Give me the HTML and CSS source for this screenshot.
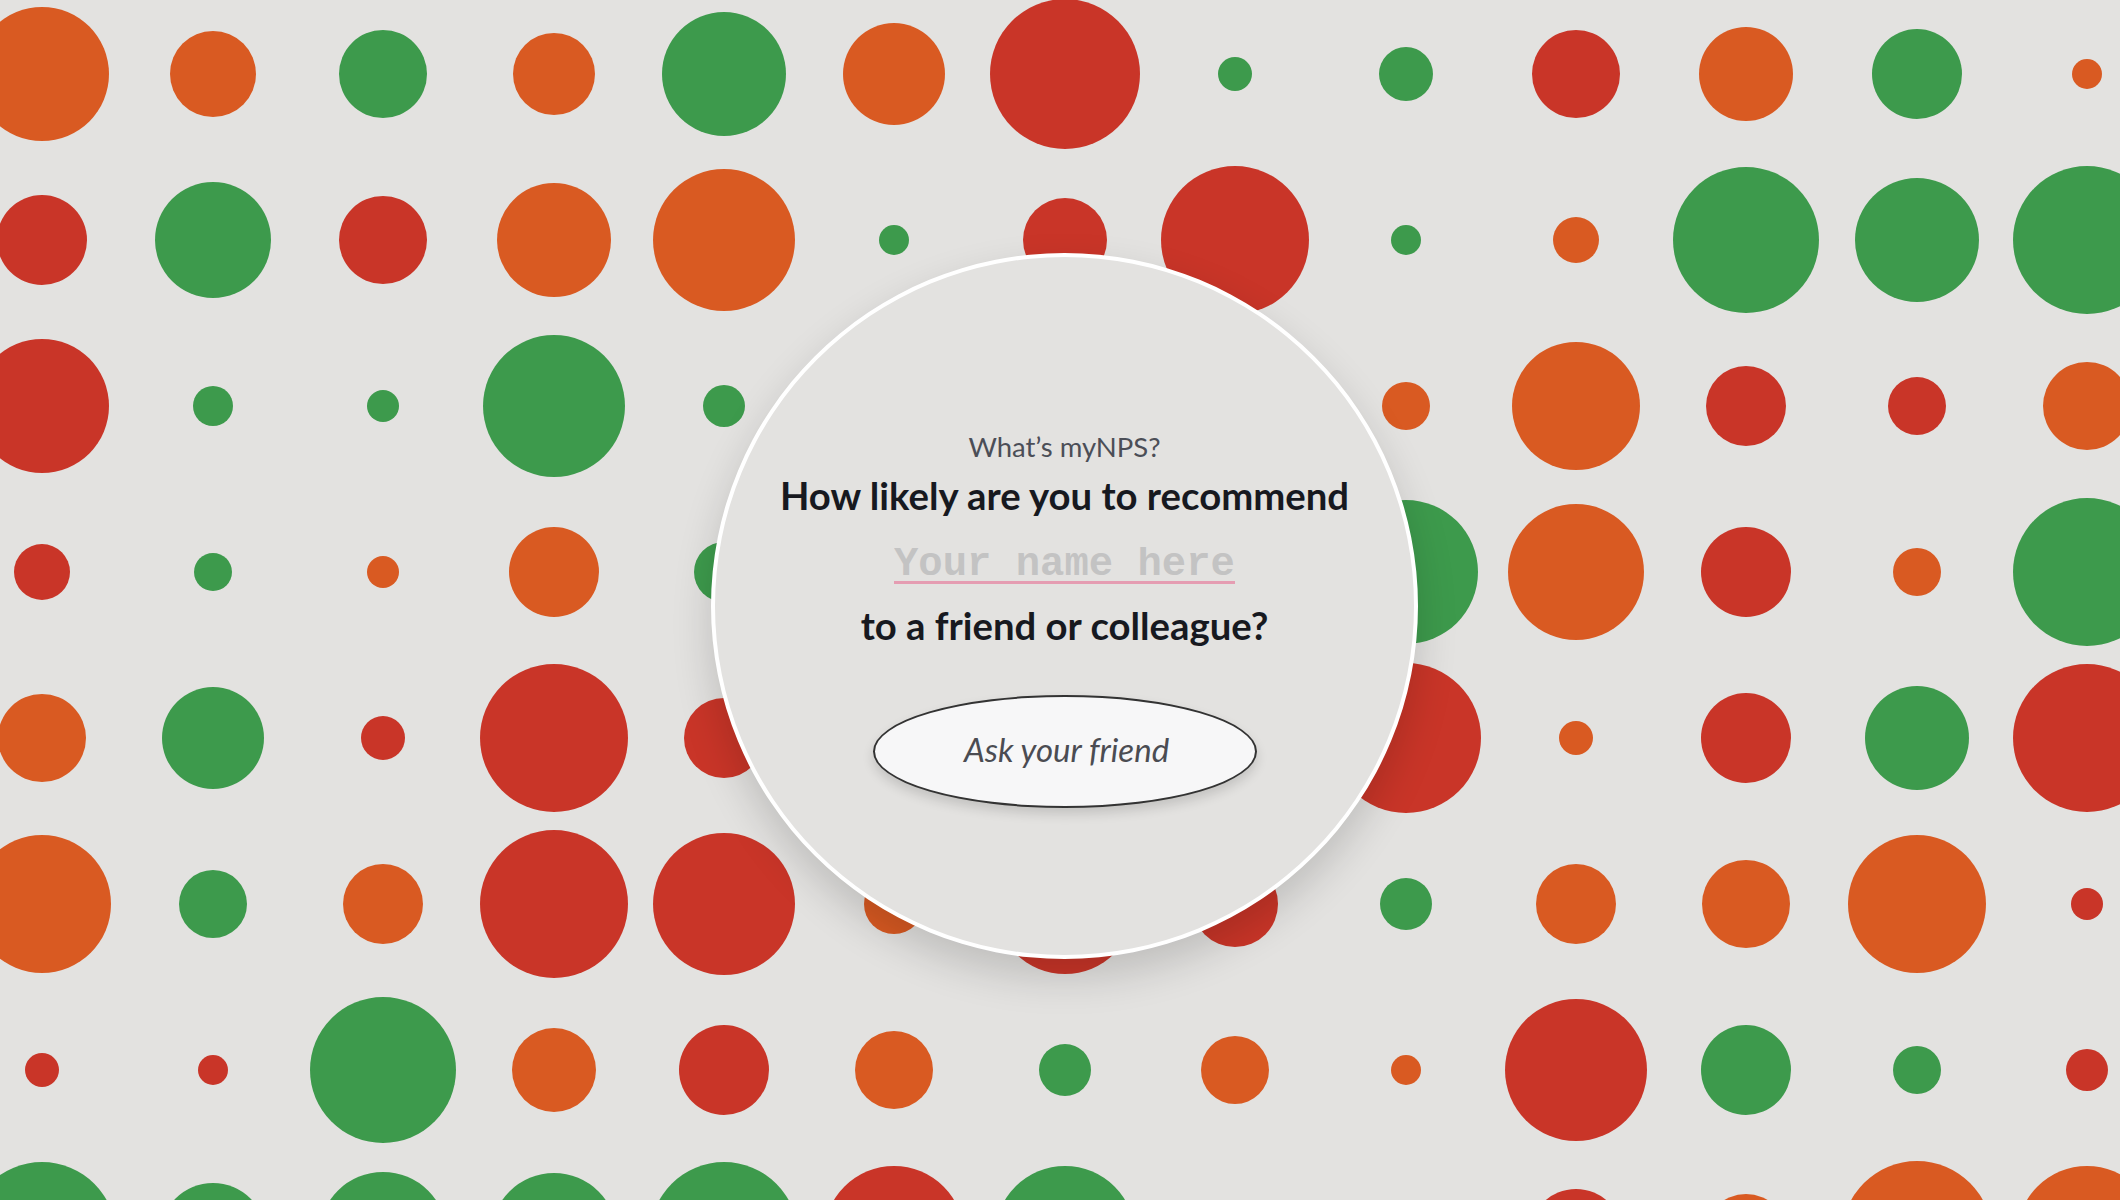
FILE: index.html
```html
<!DOCTYPE html>
<html lang="en">
<head>
<meta charset="utf-8">
<title>myNPS</title>
<link rel="stylesheet" href="styles.css">
</head>
<body>
<div class="backdrop">
<div class="field">
<div class="cell"><span class="dot o" style="width:134px;height:134px"></span></div>
<div class="cell"><span class="dot o" style="width:86px;height:86px"></span></div>
<div class="cell"><span class="dot g" style="width:88px;height:88px"></span></div>
<div class="cell"><span class="dot o" style="width:82px;height:82px"></span></div>
<div class="cell"><span class="dot g" style="width:124px;height:124px"></span></div>
<div class="cell"><span class="dot o" style="width:102px;height:102px"></span></div>
<div class="cell"><span class="dot r" style="width:150px;height:150px"></span></div>
<div class="cell"><span class="dot g" style="width:34px;height:34px"></span></div>
<div class="cell"><span class="dot g" style="width:54px;height:54px"></span></div>
<div class="cell"><span class="dot r" style="width:88px;height:88px"></span></div>
<div class="cell"><span class="dot o" style="width:94px;height:94px"></span></div>
<div class="cell"><span class="dot g" style="width:90px;height:90px"></span></div>
<div class="cell"><span class="dot o" style="width:30px;height:30px"></span></div>

<div class="cell"><span class="dot r" style="width:90px;height:90px"></span></div>
<div class="cell"><span class="dot g" style="width:116px;height:116px"></span></div>
<div class="cell"><span class="dot r" style="width:88px;height:88px"></span></div>
<div class="cell"><span class="dot o" style="width:114px;height:114px"></span></div>
<div class="cell"><span class="dot o" style="width:142px;height:142px"></span></div>
<div class="cell"><span class="dot g" style="width:30px;height:30px"></span></div>
<div class="cell"><span class="dot r" style="width:84px;height:84px"></span></div>
<div class="cell"><span class="dot r" style="width:148px;height:148px"></span></div>
<div class="cell"><span class="dot g" style="width:30px;height:30px"></span></div>
<div class="cell"><span class="dot o" style="width:46px;height:46px"></span></div>
<div class="cell"><span class="dot g" style="width:146px;height:146px"></span></div>
<div class="cell"><span class="dot g" style="width:124px;height:124px"></span></div>
<div class="cell"><span class="dot g" style="width:148px;height:148px"></span></div>

<div class="cell"><span class="dot r" style="width:134px;height:134px"></span></div>
<div class="cell"><span class="dot g" style="width:40px;height:40px"></span></div>
<div class="cell"><span class="dot g" style="width:32px;height:32px"></span></div>
<div class="cell"><span class="dot g" style="width:142px;height:142px"></span></div>
<div class="cell"><span class="dot g" style="width:42px;height:42px"></span></div>
<div class="cell"><span class="dot o" style="width:80px;height:80px"></span></div>
<div class="cell"><span class="dot g" style="width:100px;height:100px"></span></div>
<div class="cell"><span class="dot r" style="width:60px;height:60px"></span></div>
<div class="cell"><span class="dot o" style="width:48px;height:48px"></span></div>
<div class="cell"><span class="dot o" style="width:128px;height:128px"></span></div>
<div class="cell"><span class="dot r" style="width:80px;height:80px"></span></div>
<div class="cell"><span class="dot r" style="width:58px;height:58px"></span></div>
<div class="cell"><span class="dot o" style="width:88px;height:88px"></span></div>

<div class="cell"><span class="dot r" style="width:56px;height:56px"></span></div>
<div class="cell"><span class="dot g" style="width:38px;height:38px"></span></div>
<div class="cell"><span class="dot o" style="width:32px;height:32px"></span></div>
<div class="cell"><span class="dot o" style="width:90px;height:90px"></span></div>
<div class="cell"><span class="dot g" style="width:60px;height:60px"></span></div>
<div class="cell"><span class="dot r" style="width:100px;height:100px"></span></div>
<div class="cell"><span class="dot o" style="width:80px;height:80px"></span></div>
<div class="cell"><span class="dot g" style="width:60px;height:60px"></span></div>
<div class="cell"><span class="dot g" style="width:144px;height:144px"></span></div>
<div class="cell"><span class="dot o" style="width:136px;height:136px"></span></div>
<div class="cell"><span class="dot r" style="width:90px;height:90px"></span></div>
<div class="cell"><span class="dot o" style="width:48px;height:48px"></span></div>
<div class="cell"><span class="dot g" style="width:148px;height:148px"></span></div>

<div class="cell"><span class="dot o" style="width:88px;height:88px"></span></div>
<div class="cell"><span class="dot g" style="width:102px;height:102px"></span></div>
<div class="cell"><span class="dot r" style="width:44px;height:44px"></span></div>
<div class="cell"><span class="dot r" style="width:148px;height:148px"></span></div>
<div class="cell"><span class="dot r" style="width:80px;height:80px"></span></div>
<div class="cell"><span class="dot g" style="width:60px;height:60px"></span></div>
<div class="cell"><span class="dot r" style="width:100px;height:100px"></span></div>
<div class="cell"><span class="dot o" style="width:80px;height:80px"></span></div>
<div class="cell"><span class="dot r" style="width:150px;height:150px"></span></div>
<div class="cell"><span class="dot o" style="width:34px;height:34px"></span></div>
<div class="cell"><span class="dot r" style="width:90px;height:90px"></span></div>
<div class="cell"><span class="dot g" style="width:104px;height:104px"></span></div>
<div class="cell"><span class="dot r" style="width:148px;height:148px"></span></div>

<div class="cell"><span class="dot o" style="width:138px;height:138px"></span></div>
<div class="cell"><span class="dot g" style="width:68px;height:68px"></span></div>
<div class="cell"><span class="dot o" style="width:80px;height:80px"></span></div>
<div class="cell"><span class="dot r" style="width:148px;height:148px"></span></div>
<div class="cell"><span class="dot r" style="width:142px;height:142px"></span></div>
<div class="cell"><span class="dot o" style="width:60px;height:60px"></span></div>
<div class="cell"><span class="dot r" style="width:140px;height:140px"></span></div>
<div class="cell"><span class="dot r" style="width:86px;height:86px"></span></div>
<div class="cell"><span class="dot g" style="width:52px;height:52px"></span></div>
<div class="cell"><span class="dot o" style="width:80px;height:80px"></span></div>
<div class="cell"><span class="dot o" style="width:88px;height:88px"></span></div>
<div class="cell"><span class="dot o" style="width:138px;height:138px"></span></div>
<div class="cell"><span class="dot r" style="width:32px;height:32px"></span></div>

<div class="cell"><span class="dot r" style="width:34px;height:34px"></span></div>
<div class="cell"><span class="dot r" style="width:30px;height:30px"></span></div>
<div class="cell"><span class="dot g" style="width:146px;height:146px"></span></div>
<div class="cell"><span class="dot o" style="width:84px;height:84px"></span></div>
<div class="cell"><span class="dot r" style="width:90px;height:90px"></span></div>
<div class="cell"><span class="dot o" style="width:78px;height:78px"></span></div>
<div class="cell"><span class="dot g" style="width:52px;height:52px"></span></div>
<div class="cell"><span class="dot o" style="width:68px;height:68px"></span></div>
<div class="cell"><span class="dot o" style="width:30px;height:30px"></span></div>
<div class="cell"><span class="dot r" style="width:142px;height:142px"></span></div>
<div class="cell"><span class="dot g" style="width:90px;height:90px"></span></div>
<div class="cell"><span class="dot g" style="width:48px;height:48px"></span></div>
<div class="cell"><span class="dot r" style="width:42px;height:42px"></span></div>

<div class="cell"><span class="dot g" style="width:148px;height:148px"></span></div>
<div class="cell"><span class="dot g" style="width:106px;height:106px"></span></div>
<div class="cell"><span class="dot g" style="width:128px;height:128px"></span></div>
<div class="cell"><span class="dot g" style="width:126px;height:126px"></span></div>
<div class="cell"><span class="dot g" style="width:148px;height:148px"></span></div>
<div class="cell"><span class="dot r" style="width:140px;height:140px"></span></div>
<div class="cell"><span class="dot g" style="width:140px;height:140px"></span></div>
<div class="cell"><span class="dot o" style="width:40px;height:40px"></span></div>
<div class="cell"><span class="dot r" style="width:40px;height:40px"></span></div>
<div class="cell"><span class="dot r" style="width:94px;height:94px"></span></div>
<div class="cell"><span class="dot o" style="width:84px;height:84px"></span></div>
<div class="cell"><span class="dot o" style="width:150px;height:150px"></span></div>
<div class="cell"><span class="dot o" style="width:140px;height:140px"></span></div>
</div>
</div>

<div class="popup">
  <p class="kicker">What’s myNPS?</p>
  <h1 class="question first">How likely are you to recommend</h1>
  <input class="name" type="text" placeholder="Your name here">
  <h1 class="question second">to a friend or colleague?</h1>
  <button class="ask" type="button">Ask your friend</button>
</div>
</body>
</html>
```

FILE: styles.css
```css
html, body {
  margin: 0;
  padding: 0;
  width: 2120px;
  height: 1200px;
  overflow: hidden;
  background: #e3e2e0;
  font-family: Lato, "Open Sans", sans-serif;
}

.backdrop {
  width: 2120px;
  height: 1200px;
  overflow: hidden;
}

.field {
  display: grid;
  grid-template-columns: repeat(13, 170.4px);
  grid-template-rows: repeat(8, 166px);
  margin: -9px 0 0 -42.8px;
}

.cell {
  display: flex;
  align-items: center;
  justify-content: center;
}

.dot {
  display: block;
  flex: none;
  border-radius: 50%;
}

.o { background: #d95a22; }
.g { background: #3d9a4c; }
.r { background: #c93528; }

.popup {
  position: absolute;
  left: 711px;
  top: 253px;
  width: 707px;
  height: 706px;
  box-sizing: border-box;
  border: 4px solid #ffffff;
  border-radius: 50%;
  background: #e3e2e0;
  box-shadow: 0 18px 40px rgba(0, 0, 0, 0.16);
  display: flex;
  flex-direction: column;
  align-items: center;
  padding-top: 176px;
}

.kicker {
  margin: 0;
  font-size: 27.5px;
  line-height: 28px;
  color: #4b4e57;
  font-weight: 400;
}

.question {
  margin: 0;
  font-size: 38.3px;
  line-height: 40px;
  font-weight: 700;
  color: #17191f;
}

.question.first {
  margin-top: 14px;
}

.name {
  margin-top: 32px;
  width: 341px;
  height: 34px;
  padding: 0;
  border: 0;
  border-bottom: 3px solid #e59db2;
  background: transparent;
  font-family: "Liberation Mono", "Courier New", monospace;
  font-weight: 700;
  font-size: 40.6px;
  color: #555;
  text-align: left;
  outline: none;
}

.name::placeholder {
  color: #c3c3c3;
  opacity: 1;
}

.question.second {
  margin-top: 21px;
}

.ask {
  margin-top: 50px;
  width: 384px;
  height: 113px;
  box-sizing: border-box;
  border: 2px solid #333333;
  border-radius: 50%;
  background: #f7f7f8;
  box-shadow: 0 6px 12px rgba(0, 0, 0, 0.14);
  font-family: Lato, "Open Sans", sans-serif;
  font-style: italic;
  font-size: 33px;
  color: #4b4c52;
  padding: 0 0 5px 4px;
}
```
